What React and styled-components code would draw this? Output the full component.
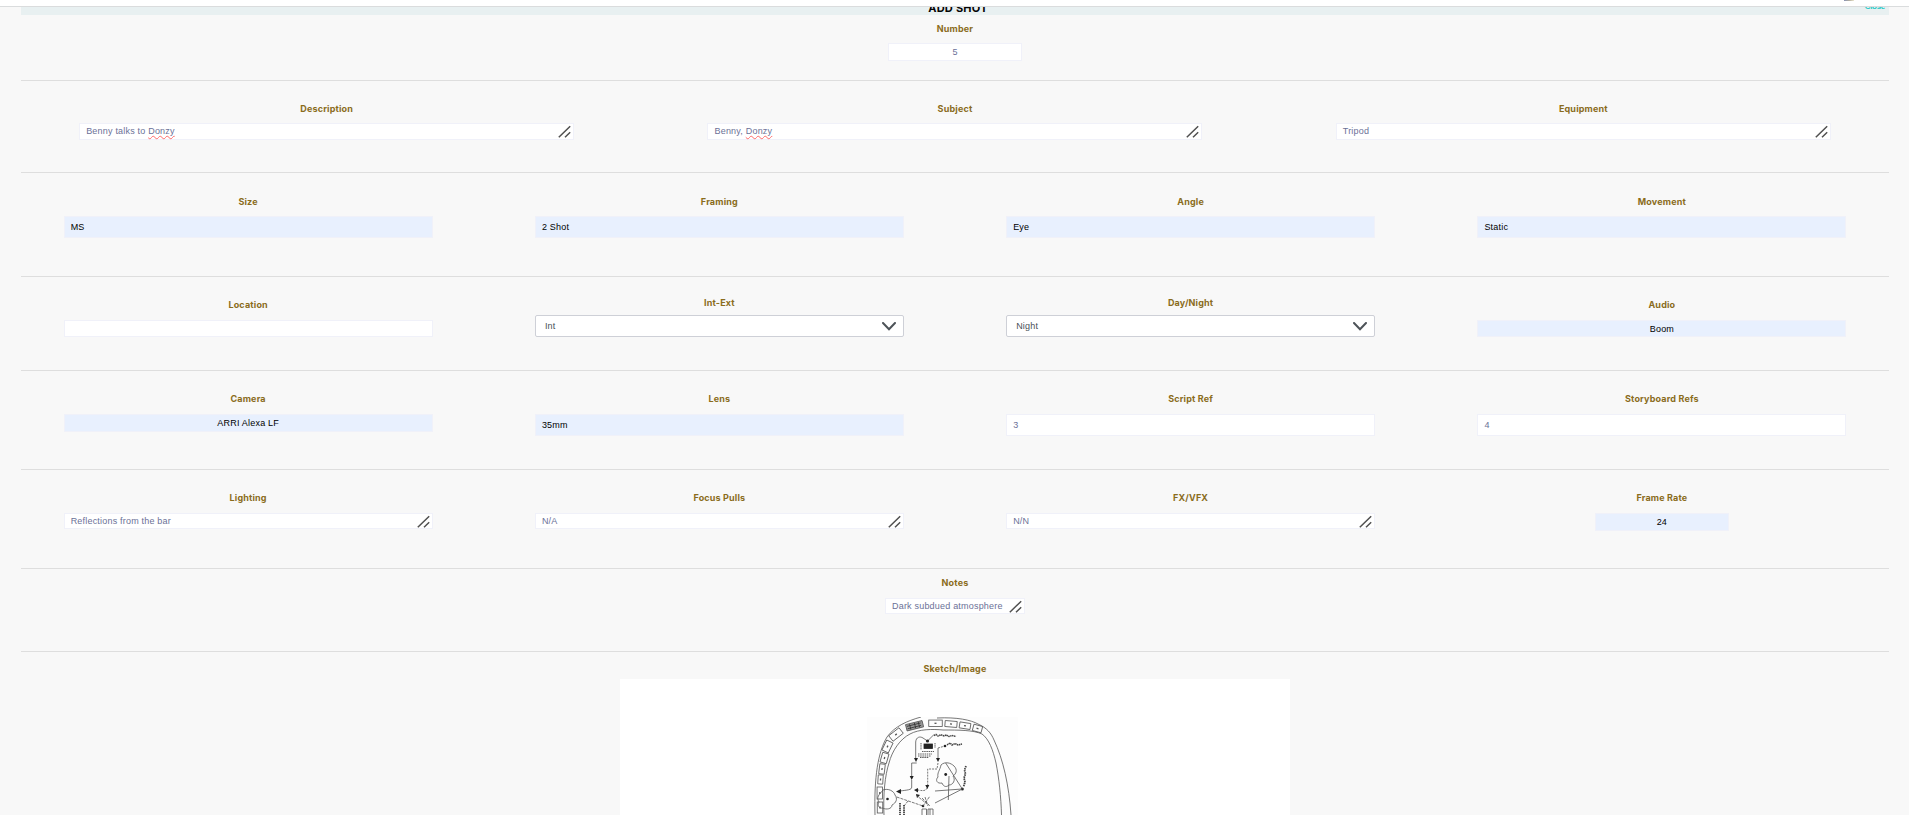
import React from "react";
import styled, { createGlobalStyle, css } from "styled-components";

const Global = createGlobalStyle`
  *, *::before, *::after { box-sizing: border-box; }
  html, body { margin: 0; padding: 0; background: #f8f8f8; }
  body { height: 815px; overflow: hidden; font-family: "Liberation Sans", Arial, sans-serif; }
`;

const Page = styled.main`
  display: flex;
  flex-direction: column;
  height: 815px;
  overflow: hidden;
  background: #f8f8f8;
`;

const TopStrip = styled.div`
  flex: none;
  height: 7px;
  padding-right: 55px;
  display: flex;
  justify-content: flex-end;
  background: #fff;
  border-bottom: 1px solid #dadcdd;
`;

const StripMark = styled.span`
  width: 10px;
  height: 1px;
  background: linear-gradient(90deg, #8792b4, #b5b0a0 55%, #ece6cf);
`;

const Form = styled.div`
  flex: 1;
  display: flex;
  flex-direction: column;
  margin: 0 20px 0 21px;
`;

const Header = styled.header`
  flex: none;
  height: 8px;
  overflow: hidden;
  display: grid;
  grid-template-columns: 1fr auto 1fr;
  align-items: start;
  background: #e8f0f1;
`;

const Title = styled.h1`
  grid-column: 2;
  margin: -5px 0 0 6px;
  font: 700 11px/12px Inter, sans-serif;
  letter-spacing: 0.25px;
  color: #050505;
`;

const Close = styled.a`
  justify-self: end;
  margin: -5px 4px 0 0;
  font: 700 8px/10px "Liberation Sans", sans-serif;
  letter-spacing: -0.3px;
  color: #22c9c6;
`;

const Section = styled.section`
  flex: none;
  display: flex;
  justify-content: center;
  height: ${(p) => p.$height}px;
  padding-top: ${(p) => p.$top}px;
  border-bottom: 1px solid #dedede;
`;

const Columns = styled.div`
  flex: none;
  display: grid;
  grid-template-columns: repeat(${(p) => p.$count}, 1fr);
  width: 1885px;
`;

const Field = styled.div`
  display: flex;
  flex-direction: column;
  align-items: center;
  padding-top: ${(p) => p.$top || 0}px;
`;

const Label = styled.label`
  margin-bottom: ${(p) => p.$gap}px;
  font: 700 9px/12px Inter, sans-serif;
  letter-spacing: 0.17px;
  white-space: nowrap;
  color: #8a6c1c;
`;

const Control = styled.div`
  display: flex;
  align-items: center;
  justify-content: ${(p) => (p.$center ? "center" : "space-between")};
  width: ${(p) => p.$width}px;
  height: ${(p) => p.$height}px;
  padding: ${(p) => (p.$center ? "0" : "0 6px")};
  border: 1px solid #f0f1f9;
  background: #fff;
  color: #6b7197;
  font-size: 9px;
  line-height: 12px;
  letter-spacing: 0.2px;
  white-space: nowrap;
  ${(p) => p.$filled && css`
    background: #e8f0fe;
    color: #000;
  `}
  ${(p) => p.$area && css`
    align-items: flex-start;
    padding-top: 1px;
    padding-right: 2px;
  `}
  ${(p) => p.$select && css`
    padding: 0 7px 0 9px;
    border-color: #ced0d7;
    border-radius: 2px;
    color: #495057;
  `}
`;

const Misspelled = styled.span`
  text-decoration: underline wavy #ff6a6a 0.5px;
  text-underline-offset: 1px;
  text-decoration-skip-ink: none;
`;

const Sketch = styled.div`
  width: 670px;
  height: 136px;
  display: flex;
  justify-content: center;
  align-items: flex-start;
  padding: 38px 25px 0 0;
  background: #fff;
`;

const Grip = () => (
  <svg width="13" height="13" viewBox="0 0 13 13" fill="none" stroke="#505050" strokeWidth="1.5">
    <path d="M0.8 12.300L12.200 1.200M7 12.300L12.200 7.300" />
  </svg>
);

const Chevron = () => (
  <svg width="14" height="9" viewBox="0 0 14 9" fill="none" stroke="#4d5358" strokeWidth="2">
    <path d="M1 1L7 7.2L13 1" strokeLinecap="round" />
  </svg>
);

const FieldItem = ({ label, value, gap = 8, top, width = 369, height = 17, kind, misspelled }) => (
  <Field $top={top}>
    <Label $gap={gap}>{label}</Label>
    <Control
      $width={width}
      $height={height}
      $filled={kind === "filled" || kind === "filledCenter"}
      $center={kind === "center" || kind === "filledCenter"}
      $area={kind === "area"}
      $select={kind === "select"}
    >
      <span>
        {value}
        {misspelled && <Misspelled>{misspelled}</Misspelled>}
      </span>
      {kind === "area" && <Grip />}
      {kind === "select" && <Chevron />}
    </Control>
  </Field>
);

// Booths along the wall: centre x, centre y, width, height, rotation
const booths = [
  [68.5, 6.3, 13.5, 6.5, 0], [84, 7, 12, 6, 5], [98, 8.7, 11, 6, 9], [110.5, 11.5, 9, 6.5, 15],
  [29, 17.5, 13, 7, -38], [20.5, 29.5, 11, 7, -64], [17.5, 41, 10, 6.5, -74], [15, 52, 10, 5.5, -83],
  [13.5, 62.5, 9, 5, -86], [12.8, 76, 12, 5.5, -90], [13, 90.5, 11, 5.5, -90],
];

const FloorPlan = () => (
  <svg width="151" height="98" viewBox="0 0 151 98" fill="none" stroke="#555" strokeWidth="0.8">
    <rect width="151" height="98" fill="#fdfdfd" stroke="none" />
    <path d="M54 0C40 4 28 9 20 20C11 35 7 60 8 98M70 1C90 0 104 3 111 7C120 11 124 16 127 23C136 42 142 68 144 98" />
    <path d="M17 98C16 78 18 58 22 46C25 34 33 22 43 17C52 12 66 12 76 13C92 13 106 13 115 17C122 22 126 33 129 46C132 61 134 80 134.500 98" />
    {booths.map(([x, y, w, h, a], i) => (
      <g key={i} transform={`rotate(${a} ${x} ${y})`}>
        <rect x={x - w / 2} y={y - h / 2} width={w} height={h} />
        <path d={`M${x - 1} ${y}h2`} strokeWidth="1.3" />
      </g>
    ))}
    <g transform="rotate(-14 47.5 8.5)">
      <rect x="39" y="5.500" width="17" height="6.500" fill="#999" />
      <path d="M40 7.500h14M40 10h14M43 6v5.500M48 6v5.500M52 6v5.500" stroke="#333" />
    </g>
    <path d="M48.700 42V25C49 20 53 19 56 21L60.500 24L67 17.500M49.700 46H44.700V61M44.700 63V70C45 73 40 73 33 74M71 41V31" />
    <path d="M71 31L78 29M71 46L70 52H60.700V69M60 71C59 74 56 74 51 73" strokeDasharray="2 1" />
    <rect x="57" y="27" width="8.500" height="4.500" fill="#222" stroke="#222" />
    <path d="M54 26v7M55 34.500h12M68 26v5M51 37h14M51 39h13M53 40.500h9" strokeDasharray="1.500 .7" stroke="#333" />
    <path d="M67 18.500L69 17.500L71 19L74 17.800L77 19L79 18L82 19.500L85 18.500L89 19.500M80 28L83 26L85 28L88 26.500L91 28L95 27" stroke="#444" strokeWidth="1.500" strokeDasharray="1.500 .5" />
    <g fill="#222" stroke="none">
      <path d="M47 41h4l-2 4zM69 41h4l-2 4zM42.700 59h4l-2 4zM58.300 68h4l-2 4zM34 72v5l-5-2.500zM51 71v4.500l-4-2.500zM49 77l4 1-3 3z" />
      <circle cx="60.500" cy="24" r="1.600" />
      <circle cx="78" cy="29" r="1.300" />
      <circle cx="78.700" cy="57.500" r="1.400" />
      <circle cx="95.300" cy="72" r="1.500" />
      <circle cx="20.500" cy="82" r="1.300" />
      <circle cx="56" cy="89" r="1.300" />
    </g>
    <path d="M74 48C78 44 84 46 87 49C91 53 89 57 86 59C89 63 86 68 82 68C79 71 76 69 75 66C70 67 68 63 71 60C70 56 73 53 74 48Z" />
    <path d="M78.700 46L95.300 72L68 86M68 74L95 72M82 59L81.300 83M16 73C21 71 27 74 28 78C31 82 29 86 25 88C25 92 19 93 16 91C12 92 10 88 12 85C9 80 12 78 16 73Z" />
    <path d="M29.700 80L56 89M49 78L60 87M55 81L63 89M56 89L63 79M58 80L61 89M41 84L37 89" strokeDasharray="3 1" />
    <path d="M99 49L97.500 53L98.500 57L97 61L98 65L96.500 70M33 86V98M37 88V98" stroke="#444" strokeWidth="1.800" strokeDasharray="1.500 .7" />
    <path d="M55 98V92H59.500V98M61 98V92H66V98M63 92V98" />
  </svg>
);

export default function App() {
  return (
    <Page>
      <Global />
      <TopStrip><StripMark /></TopStrip>
      <Form>
        <Header>
          <Title>ADD SHOT</Title>
          <Close>Close</Close>
        </Header>

        <Section $height={66} $top={8}>
          <FieldItem label="Number" value="5" kind="center" width={134} height={18} />
        </Section>

        <Section $height={92} $top={22}>
          <Columns $count={3}>
            <FieldItem label="Description" value="Benny talks to " misspelled="Donzy" kind="area" width={495} />
            <FieldItem label="Subject" value="Benny, " misspelled="Donzy" kind="area" width={495} />
            <FieldItem label="Equipment" value="Tripod" kind="area" width={495} />
          </Columns>
        </Section>

        <Section $height={104} $top={23}>
          <Columns $count={4}>
            <FieldItem label="Size" value="MS" kind="filled" height={22} />
            <FieldItem label="Framing" value="2 Shot" kind="filled" height={22} />
            <FieldItem label="Angle" value="Eye" kind="filled" height={22} />
            <FieldItem label="Movement" value="Static" kind="filled" height={22} />
          </Columns>
        </Section>

        <Section $height={94} $top={20}>
          <Columns $count={4}>
            <FieldItem label="Location" top={2} gap={9} value="" />
            <FieldItem label="Int-Ext" gap={6} value="Int" kind="select" height={22} />
            <FieldItem label="Day/Night" gap={6} value="Night" kind="select" height={22} />
            <FieldItem label="Audio" top={2} gap={9} value="Boom" kind="filledCenter" />
          </Columns>
        </Section>

        <Section $height={99} $top={22}>
          <Columns $count={4}>
            <FieldItem label="Camera" gap={9} value="ARRI Alexa LF" kind="filledCenter" height={18} />
            <FieldItem label="Lens" gap={9} value="35mm" kind="filled" height={22} />
            <FieldItem label="Script Ref" gap={9} value="3" height={22} />
            <FieldItem label="Storyboard Refs" gap={9} value="4" height={22} />
          </Columns>
        </Section>

        <Section $height={99} $top={22}>
          <Columns $count={4}>
            <FieldItem label="Lighting" gap={9} value="Reflections from the bar" kind="area" height={16} />
            <FieldItem label="Focus Pulls" gap={9} value="N/A" kind="area" height={16} />
            <FieldItem label="FX/VFX" gap={9} value="N/N" kind="area" height={16} />
            <FieldItem label="Frame Rate" gap={9} value="24" kind="filledCenter" width={134} height={18} />
          </Columns>
        </Section>

        <Section $height={83} $top={8}>
          <FieldItem label="Notes" gap={9} value="Dark subdued atmosphere" kind="area" width={140} height={16} />
        </Section>

        <Field $top={11}>
          <Label $gap={4}>Sketch/Image</Label>
          <Sketch><FloorPlan /></Sketch>
        </Field>
      </Form>
    </Page>
  );
}
